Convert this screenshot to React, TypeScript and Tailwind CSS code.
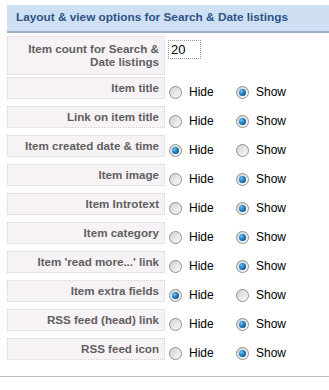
import React from "react";

const rows: { label: string; show: boolean }[] = [
    { label: "Item title", show: true },
    { label: "Link on item title", show: true },
    { label: "Item created date & time", show: false },
    { label: "Item image", show: true },
    { label: "Item Introtext", show: true },
    { label: "Item category", show: true },
    { label: "Item 'read more...' link", show: true },
    { label: "Item extra fields", show: false },
    { label: "RSS feed (head) link", show: true },
    { label: "RSS feed icon", show: true },
];

function Radio({ checked }: { checked: boolean }) {
    return (
        <span className="relative flex h-[13px] w-[13px] shrink-0 items-center justify-center rounded-full border border-[#8e8f8f] bg-gradient-to-br from-[#d2d2d2] to-[#fbfbfb]">
            {checked && (
                <span className="h-[7px] w-[7px] rounded-full bg-[radial-gradient(circle_at_35%_35%,#6fc0f0_0%,#1f7cc0_45%,#0b3a66_100%)]" />
            )}
        </span>
    );
}

function Option({ text, checked, width }: { text: string; checked: boolean; width: string }) {
    return (
        <label className={`flex items-center gap-[7px] ${width}`}>
            <Radio checked={checked} />
            <span className="text-[12px] leading-[14px] text-black">{text}</span>
        </label>
    );
}

export default function App() {
    return (
        <div className="h-[390px] w-[329px] bg-white pt-[5px] font-['Liberation_Sans',Arial,sans-serif]">
            <div className="ml-[7px] flex h-[28px] items-center border-b-2 border-[#9cadc9] bg-[#cfe0f4] pl-[9px]">
                <h2 className="text-[11.8px] font-bold text-[#2d5287]">Layout &amp; view options for Search &amp; Date listings</h2>
            </div>

            <div className="ml-[7px] mt-[3px] flex flex-col">
                <div className="mb-[2px] flex items-start">
                    <div className="h-[39px] w-[158px] border border-dotted border-[#d6d6d6] bg-[#f6f2f6] pr-[5px] pt-[5px] text-right text-[11.6px] font-bold leading-[13px] text-[#5f5f5f]">
                        Item count for Search &amp;<br />Date listings
                    </div>
                    <input
                        defaultValue="20"
                        className="ml-[3px] mt-[4px] h-[19px] w-[33px] border border-dotted border-[#999] px-[2px] text-[13px] text-black outline-none"
                    />
                </div>

                {rows.map((r) => (
                    <div key={r.label} className="flex h-[29px] items-start">
                        <div className="h-[22px] w-[158px] border border-dotted border-[#d6d6d6] bg-[#f6f2f6] pr-[5px] pt-[3px] text-right text-[11.6px] font-bold leading-[13px] text-[#5f5f5f]">
                            {r.label}
                        </div>
                        <div className="ml-[4px] mt-[8px] flex items-center">
                            <Option text="Hide" checked={!r.show} width="w-[67px]" />
                            <Option text="Show" checked={r.show} width="" />
                        </div>
                    </div>
                ))}
            </div>

            <div className="mt-[9px] border-t border-[#bdbdbd]" />
        </div>
    );
}
